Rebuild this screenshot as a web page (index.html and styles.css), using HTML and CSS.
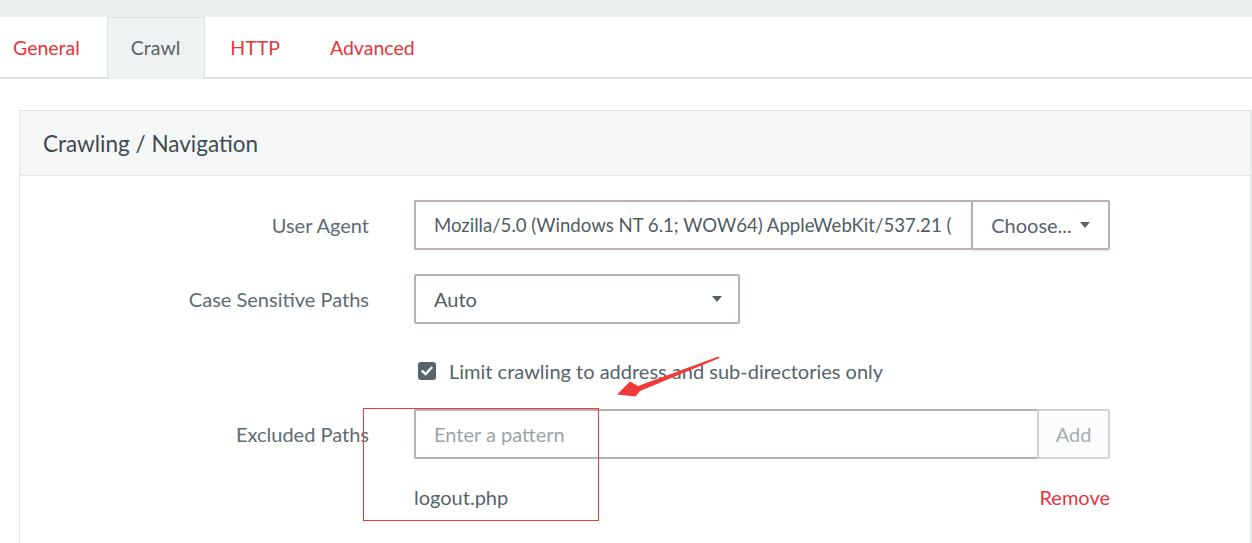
FILE: index.html
```html
<!DOCTYPE html>
<html>
<head>
<meta charset="utf-8">
<link rel="stylesheet" href="styles.css">
</head>
<body>
<div class="topbar"></div>
<nav class="tabs">
  <a class="tab first">General</a>
  <a class="tab active">Crawl</a>
  <a class="tab">HTTP</a>
  <a class="tab">Advanced</a>
</nav>
<section class="panel">
  <header class="panel-heading">Crawling / Navigation</header>
  <div class="panel-body">
    <div class="row">
      <label class="label">User Agent</label>
      <div class="field group">
        <div class="input ua"><span class="clip">Mozilla/5.0 (Windows NT 6.1; WOW64) AppleWebKit/537.21 (</span></div>
        <div class="btn choose">Choose... <span class="caret"></span></div>
      </div>
    </div>
    <div class="row">
      <label class="label">Case Sensitive Paths</label>
      <div class="field">
        <div class="input select">Auto <span class="caret"></span></div>
      </div>
    </div>
    <div class="row check-row">
      <div class="label"></div>
      <div class="field check">
        <span class="checkbox"><svg width="12" height="10" viewBox="0 0 12 10"><path d="M1.5 5.2 L4.6 8.2 L10.5 1.8" fill="none" stroke="#fff" stroke-width="2.4" stroke-linecap="round" stroke-linejoin="round"/></svg></span>
        <span>Limit crawling to address and sub-directories only</span>
      </div>
    </div>
    <div class="row">
      <label class="label">Excluded Paths</label>
      <div class="field group">
        <div class="input placeholder">Enter a pattern</div>
        <div class="btn add">Add</div>
      </div>
    </div>
    <div class="row item-row">
      <div class="label"></div>
      <div class="field item">
        <span>logout.php</span>
        <a class="remove">Remove</a>
      </div>
    </div>
  </div>
</section>
<div class="annot-box"></div>
<svg class="annot-arrow" width="110" height="45" viewBox="0 0 110 45">
  <path d="M102.5 0.5 L22 30 L14 25.5 L1 38.5 L19.5 40.5 L24 35 L103.5 2 Z" fill="#f03a3a"/>
</svg>
</body>
</html>
```

FILE: styles.css
```css
* { box-sizing: border-box; }
html, body { margin: 0; padding: 0; background: #fff; }
body {
  font-family: "Lato", "Noto Sans", sans-serif;
  color: #5a6870;
  width: 1252px;
  height: 543px;
  overflow: hidden;
  position: relative;
}
.topbar { height: 17px; background: #ecf0f1; }
.tabs {
  display: flex;
  height: 62px;
  border-bottom: 2px solid #e0e6e7;
}
.tab {
  display: flex;
  align-items: center;
  padding: 0 25px 2px;
  font-size: 19.5px;
  color: #e8353c;
  height: 62px;
  margin-bottom: -2px;
}
.tab.first { padding-left: 13px; padding-right: 27px; }
.tab.active {
  background: #eef2f3;
  border: 1px solid #d7dfe0;
  border-bottom: none;
  color: #5d6468;
  padding: 0 24px 2px 23px;
}
.panel {
  margin: 31px 0 0 19px;
  border: 1px solid #dfe5e6;
  border-right: 2px solid #e6eaea;
  height: 460px;
}
.panel-heading {
  height: 65px;
  background: #f5f7f7;
  border-bottom: 1px solid #e1e7e7;
  padding-left: 23px;
  display: flex;
  align-items: center;
  font-size: 22.5px;
  color: #3e4a4f;
}
.panel-body { padding-top: 24px; }
.row {
  display: grid;
  grid-template-columns: 349px 696px;
  column-gap: 45px;
  align-items: center;
  margin-bottom: 24px;
}
.label {
  text-align: right;
  font-size: 20px;
  color: #5d6b73;
}
.field { font-size: 20px; color: #55636a; }
.group { display: flex; height: 50px; }
.input {
  height: 50px;
  border: 2px solid #bbb1b1;
  border-radius: 2px;
  display: flex;
  align-items: center;
  padding: 0 18px;
  color: #4f5c62;
  white-space: nowrap;
  overflow: hidden;
}
.clip { display: block; overflow: hidden; white-space: nowrap; flex: 1; font-size: 18.6px; }
.ua { width: 557px; border-right: none; border-radius: 2px 0 0 2px; }
.btn {
  height: 50px;
  border: 2px solid #bbb1b1;
  border-radius: 0 2px 2px 0;
  display: flex;
  align-items: center;
  justify-content: center;
}
.choose { width: 139px; color: #55636a; gap: 8px; box-shadow: 0 1px 2px rgba(0,0,0,0.12); }
.caret {
  width: 0; height: 0;
  border-left: 5px solid transparent;
  border-right: 5px solid transparent;
  border-top: 6px solid #55636a;
  display: inline-block;
}
.select { width: 326px; justify-content: space-between; padding-right: 16px; }
.check-row { height: 46px; margin-bottom: 15px; }
.check { display: flex; align-items: center; gap: 13px; padding-left: 4px; color: #55636a; }
.checkbox {
  width: 18px; height: 18px;
  background: #56646b;
  border-radius: 3px;
  display: flex; align-items: center; justify-content: center;
}
.placeholder { width: 623px; color: #9aa3a7; border-right: none; border-radius: 2px 0 0 2px; padding-left: 18px; }
.add {
  width: 73px;
  background: #fbfcfc;
  border-color: #d6d1d1;
  color: #a3adb2;
}
.item-row { height: 28px; }
.item { display: flex; justify-content: space-between; color: #55636a; }
.remove { color: #e8353c; }
.annot-box {
  position: absolute;
  left: 363px; top: 408px;
  width: 236px; height: 113px;
  border: 1px solid #f03a3a;
}
.annot-arrow {
  position: absolute;
  left: 616px; top: 356px;
}
```
